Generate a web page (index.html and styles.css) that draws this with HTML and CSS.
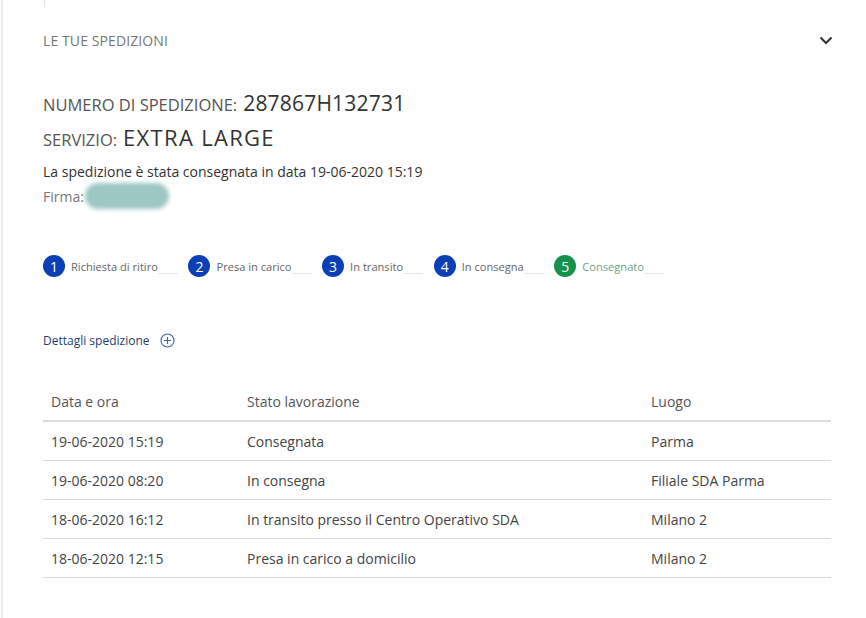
FILE: index.html
```html
<!DOCTYPE html>
<html lang="it">
<head>
<meta charset="utf-8">
<link rel="stylesheet" href="styles.css">
</head>
<body>
<div class="page">
  <div class="topline"></div>
  <div class="panel">
    <div class="panel-head">
      <span class="panel-title">LE TUE SPEDIZIONI</span>
      <svg class="chev" width="14" height="10" viewBox="0 0 14 10"><path d="M1.5 2.5 L7 8 L12.5 2.5" fill="none" stroke="#333" stroke-width="2"/></svg>
    </div>
    <div class="info">
      <div class="line-big"><span class="lbl">NUMERO DI SPEDIZIONE:</span> <span class="val">287867H132731</span></div>
      <div class="line-big l2"><span class="lbl">SERVIZIO:</span> <span class="val val2">EXTRA LARGE</span></div>
      <p class="msg">La spedizione è stata consegnata in data 19-06-2020 15:19</p>
      <p class="msg firma">Firma:<span class="blur"></span></p>
    </div>
    <ol class="steps">
      <li class="step"><span class="num">1</span><span class="slabel">Richiesta di ritiro</span><span class="tail"></span></li>
      <li class="step"><span class="num">2</span><span class="slabel">Presa in carico</span><span class="tail"></span></li>
      <li class="step"><span class="num">3</span><span class="slabel">In transito</span><span class="tail"></span></li>
      <li class="step"><span class="num">4</span><span class="slabel">In consegna</span><span class="tail"></span></li>
      <li class="step done"><span class="num">5</span><span class="slabel">Consegnato</span><span class="tail"></span></li>
    </ol>
    <div class="details">
      <span>Dettagli spedizione</span>
      <svg width="15" height="15" viewBox="0 0 15 15"><circle cx="7.5" cy="7.5" r="6.5" fill="none" stroke="#3f63a3" stroke-width="1.1"/><path d="M7.5 4 V11 M4 7.5 H11" stroke="#3f63a3" stroke-width="1.1"/></svg>
    </div>
    <table class="tbl">
      <thead>
        <tr><th class="c1">Data e ora</th><th class="c2">Stato lavorazione</th><th>Luogo</th></tr>
      </thead>
      <tbody>
        <tr><td>19-06-2020 15:19</td><td>Consegnata</td><td>Parma</td></tr>
        <tr><td>19-06-2020 08:20</td><td>In consegna</td><td>Filiale SDA Parma</td></tr>
        <tr><td>18-06-2020 16:12</td><td>In transito presso il Centro Operativo SDA</td><td>Milano 2</td></tr>
        <tr><td>18-06-2020 12:15</td><td>Presa in carico a domicilio</td><td>Milano 2</td></tr>
      </tbody>
    </table>
  </div>
</div>
</body>
</html>
```
FILE: styles.css
```css
html, body { margin: 0; padding: 0; background: #fff; }
body { font-family: "Open Sans", "Noto Sans", sans-serif; color: #444; }
.page {
  width: 866px; height: 618px; box-sizing: border-box;
  border-left: 2px solid #eeeeee; margin-left: 1px;
  position: relative; overflow: hidden;
}
.topline { position: absolute; left: 41px; top: 0; width: 1px; height: 7px; background: #e2e2e2; }
.panel { padding: 0 34px 0 40px; }
.panel-head {
  display: flex; justify-content: space-between; align-items: center;
  height: 20px; margin-top: 30px;
}
.panel-title { font-size: 14px; color: #777; letter-spacing: 0.1px; font-weight: 400; }
.chev { margin-top: 0; }
.info { margin-top: 39px; }
.line-big { display: flex; align-items: baseline; gap: 6px; height: 33px; }
.line-big.l2 { height: 37px; }
.lbl { font-size: 16.5px; color: #555; }
.val { font-size: 21px; color: #333; letter-spacing: 0.2px; }
.val2 { font-size: 22px; letter-spacing: 1.3px; }
.msg { margin: 0; font-size: 14px; color: #333; line-height: 25px; }
.firma { display: flex; align-items: center; color: #777; height: 24px; }
.blur {
  display: inline-block; width: 84px; height: 26px; border-radius: 13px;
  background: #9cc7c3; filter: blur(2px); margin-left: 1px;
}
.steps {
  list-style: none; margin: 47px 0 0; padding: 0;
  display: flex; gap: 10.6px; align-items: center;
}
.step { display: flex; align-items: center; }
.num {
  width: 22px; height: 22px; border-radius: 50%;
  background: #0a3fb5; color: #fff; font-size: 14px;
  display: flex; align-items: center; justify-content: center;
}
.slabel { font-size: 11.1px; color: #666; margin-left: 6px; padding-top: 1px; }
.tail { width: 20px; height: 1px; background: #e6e6e6; align-self: flex-end; margin-bottom: 3px; }
.done .num { background: #14914a; }
.done .slabel { color: #6aa382; }
.details {
  margin-top: 55px; display: flex; align-items: center; gap: 10px;
  font-size: 12px; color: #243f6f;
}
.tbl {
  margin-top: 33px; width: 788px; border-collapse: collapse;
  font-size: 14px;
}
.tbl th { text-align: left; font-weight: 400; color: #555; height: 38px; padding: 0 8px; border-bottom: 2px solid #dddddd; }
.tbl td { height: 38px; padding: 0 8px; border-bottom: 1px solid #d9d9d9; color: #444; }
.tbl .c1 { width: 180px; }
.tbl .c2 { width: 388px; }
```
